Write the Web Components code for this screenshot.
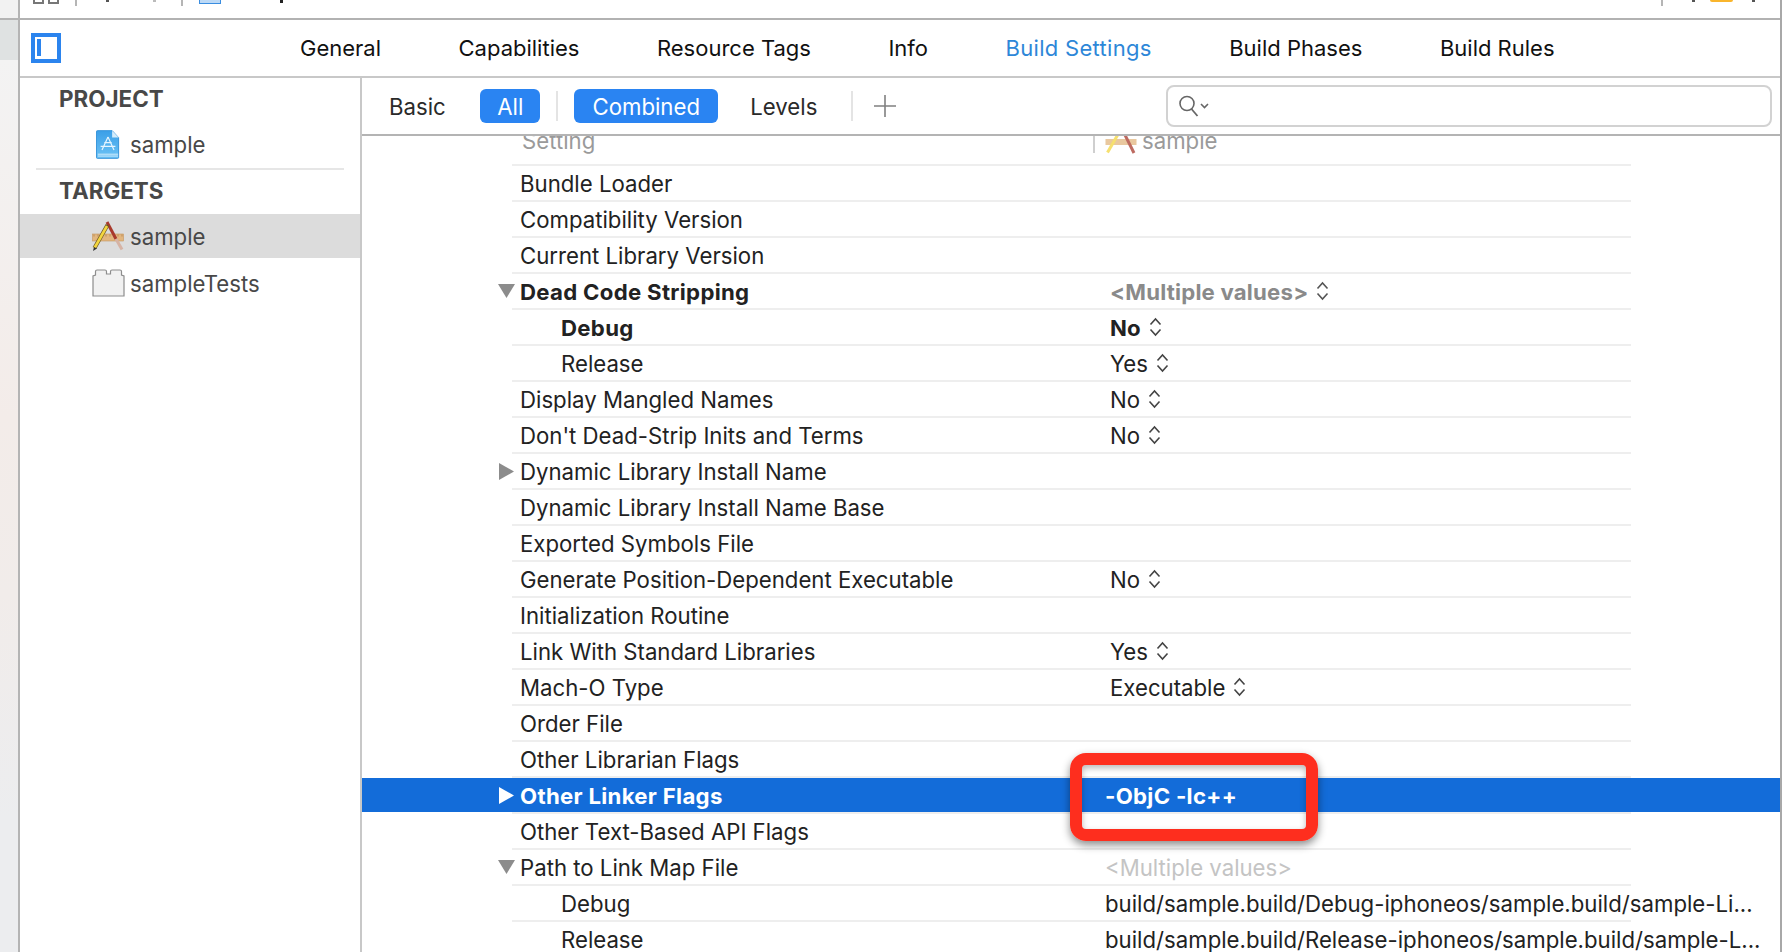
<!DOCTYPE html>
<html>
<head>
<meta charset="utf-8">
<title>Build Settings</title>
<style>
  html, body { margin: 0; padding: 0; height: 100%; overflow: hidden; background: #fff; }
  body { font-family: Inter, "Liberation Sans", sans-serif; }
</style>
</head>
<body>

<template id="icons">
  <svg data-icon="project" width="24" height="31" viewBox="0 0 26 32">
    <defs><linearGradient id="docfill" x1="0" y1="0" x2="0" y2="1"><stop offset="0" stop-color="#3b9fe8"/><stop offset="1" stop-color="#6cc3f5"/></linearGradient></defs>
    <path d="M1.5 1h16l7 7.5V30a1 1 0 0 1-1 1h-22a1 1 0 0 1-1-1V2a1 1 0 0 1 1-1z" fill="url(#docfill)" stroke="#2f8fd8"/>
    <path d="M17.5 1v7.5h7z" fill="#d4ecfb"/>
    <path d="M2 26.5h22M2 28.5h22" stroke="#d8effc" stroke-width="1"/>
    <path d="M13 8l-6.5 14M13 8l6.5 14M5 18h16M9 14h8" stroke="#e6f5ff" stroke-width="1.3" fill="none"/>
  </svg>
  <svg data-icon="target" width="32" height="30" viewBox="0 0 32 30">
    <rect x="0.5" y="13" width="31" height="7" fill="#e2b67f" stroke="#c7975f" stroke-width=".6"/>
    <path d="M2 13.5v2M6 13.5v2M10 13.5v2M14 13.5v2M18 13.5v2M22 13.5v2M26 13.5v2M30 13.5v2" stroke="#a97c49" stroke-width=".7"/>
    <path d="M15 1L24 18" stroke="#a8392c" stroke-width="3"/>
    <path d="M24 18L30 28.5" stroke="#d6b3a4" stroke-width="3"/>
    <path d="M15.5 4L2.5 27" stroke="#6a5526" stroke-width="4"/>
    <path d="M15 5L2.5 27" stroke="#f3d63f" stroke-width="2.6"/>
    <path d="M1 30l1-4 3 1.5z" fill="#333"/>
  </svg>
  <svg data-icon="bundle" width="33" height="28" viewBox="0 0 33 28">
    <path d="M1 27V7l2.5-1V2.5A1.5 1.5 0 0 1 5 1h8a1.5 1.5 0 0 1 1.5 1.5V5h4V2.5A1.5 1.5 0 0 1 20 1h8a1.5 1.5 0 0 1 1.5 1.5V6L32 7v20z" fill="#f1f1f1" stroke="#8d8d8d" stroke-width="1.2"/>
  </svg>
  <svg data-icon="stepper" width="13" height="20" viewBox="0 0 13 20">
    <path d="M1.5 7.5L6.5 2l5 5.5M1.5 12.5l5 5.5 5-5.5" fill="none" stroke="currentColor" stroke-width="1.6"/>
  </svg>
</template>

<template id="xc-toolbar-stub">
  <style>
    :host { display: flex; align-items: flex-start; height: 18px; background: #fff; border-bottom: 2px solid #b2b2b2; overflow: hidden; }
    i { display: block; flex: none; }
    .box { width: 7px; height: 2px; border: 2px solid #777; border-top: 0; margin-right: 4px; }
    .sep { width: 2px; height: 6px; background: #b5b5b5; }
    .dot { width: 3px; height: 2px; background: #555; }
    .doc { width: 20px; height: 3px; background: #bcd9f6; border: 1px solid #3a8de0; border-top: 0; }
    .yellow { width: 23px; height: 2px; background: #f9b52c; border-radius: 0 0 5px 5px; }
  </style>
  <i class="box" style="margin-left:13px"></i><i class="box"></i>
  <i class="sep" style="margin-left:12px"></i>
  <i class="dot" style="margin-left:29px"></i>
  <i class="dot" style="margin-left:44px;background:#bbb"></i>
  <i class="sep" style="margin-left:25px"></i>
  <i class="doc" style="margin-left:16px"></i>
  <i class="dot" style="margin-left:59px;background:#222;height:3px"></i>
  <i class="sep" style="margin-left:1378px"></i>
  <i class="dot" style="margin-left:29px"></i>
  <i class="yellow" style="margin-left:15px"></i>
  <i class="dot" style="margin-left:19px"></i>
</template>

<template id="xc-tabs">
  <style>
    :host { display: flex; align-items: center; height: 56px; border-bottom: 2px solid #c8c8c8; background: #fff; font-size: 22px; color: #111; }
    .toggle { flex: none; margin-left: 11px; margin-right: 239px; width: 30px; height: 30px; }
    .tabs { display: flex; gap: 77.5px; margin-top: -1px; }
    ::slotted(.active) { color: #2d87d8; letter-spacing: .3px; }
  </style>
  <svg class="toggle" viewBox="0 0 30 30">
    <rect width="30" height="30" fill="#2b84ee"/>
    <rect x="4" y="4" width="22" height="22" fill="#fff"/>
    <rect x="6" y="6" width="4" height="17" fill="#2b84ee"/>
  </svg>
  <div class="tabs"><slot></slot></div>
</template>

<template id="xc-sidebar">
  <style>
    :host { display: block; flex: none; width: 340px; box-sizing: content-box; border-right: 2px solid #c8c8c8; background: #fff; color: #444; font-size: 22.2px; overflow: hidden; }
  </style>
  <slot></slot>
</template>

<template id="xc-side-head">
  <style>
    :host { display: flex; align-items: center; height: 40px; padding-bottom: 4px; padding-left: 39px; font-weight: 700; font-size: 22.4px; color: #484848; }
  </style>
  <slot></slot>
</template>

<template id="xc-side-item">
  <style>
    :host { display: flex; align-items: center; height: 44px; color: #484848; position: relative; }
    :host([selected]) { background: #dcdcdc; }
    .icon { width: 36px; margin-left: 70px; margin-right: 4px; display: flex; justify-content: center; }
  </style>
  <span class="icon"></span><slot></slot>
</template>

<template id="xc-filter-bar">
  <style>
    :host { display: flex; align-items: center; height: 56px; border-bottom: 2px solid #b4b4b4; padding-left: 27px; background: #fff; font-size: 22.2px; color: #2a2a2a; flex: none; }
    span { display: flex; align-items: center; height: 34px; flex: none; }
    .on { background: #2a84f2; color: #fff; border-radius: 6px; justify-content: center; }
    .sep { width: 2px; height: 30px; background: #e4e4e4; }
    .search { margin-left: auto; margin-right: 8px; width: 606px; height: 42px; box-sizing: border-box; border: 2px solid #d2d2d2; border-radius: 8px; padding-left: 11px; }
    svg { display: block; }
  </style>
  <span>Basic</span>
  <span class="on" style="width:60px;margin-left:34.5px">All</span>
  <span class="sep" style="margin-left:16px"></span>
  <span class="on" style="width:144px;margin-left:16px">Combined</span>
  <span style="margin-left:32px">Levels</span>
  <span class="sep" style="margin-left:33.5px"></span>
  <svg style="margin-left:21px" width="22" height="22" viewBox="0 0 22 22"><path d="M11 0v22M0 11h22" stroke="#808080" stroke-width="1.6"/></svg>
  <span class="search">
    <svg width="32" height="22" viewBox="0 0 32 22">
      <circle cx="8" cy="8.5" r="7" fill="none" stroke="#666" stroke-width="1.6"/>
      <path d="M12.5 14l6 7" stroke="#666" stroke-width="1.8"/>
      <path d="M22 9l3.5 3.5L29 9" fill="none" stroke="#666" stroke-width="1.6"/>
    </svg>
  </span>
</template>

<template id="xc-row">
  <style>
    :host { display: block; height: 36px; font-size: 22.2px; color: #222; white-space: nowrap; }
    .line { display: flex; align-items: center; box-sizing: border-box; height: 36px; margin-left: 150px; width: 1119px; border-bottom: 2px solid #eeeeee; }
    :host([selected]) { color: #fff; font-weight: 700; letter-spacing: .3px; }
    :host([selected]) .wrap { background: linear-gradient(#136cd9, #136cd9) left top / 100% 34px no-repeat; }
    :host([strong]) .name { font-weight: 700; letter-spacing: .3px; }
    /* The triangle hangs out on the left of the separator line. */
    .arrow { flex: none; width: 8px; }
    .arrow svg { margin-left: -14px; }
    .name { flex: none; width: 585px; box-sizing: border-box; }
    :host([indent]) .name { padding-left: 41px; }
    .value { flex: none; display: flex; align-items: center; gap: 8px; }
    :host([stepper]) .value { padding-left: 5px; }
    .step { display: none; }
    :host([stepper]) .step { display: block; }
    :host([valbold]) .value { font-weight: 700; letter-spacing: .2px; }
    :host([muted]) .value { color: #8a8a8a; }
    :host([faint]) .value { color: #c4c4c4; }
    svg { display: block; }
  </style>
  <div class="wrap"><div class="line">
    <span class="arrow"></span>
    <span class="name"><slot></slot></span>
    <span class="value"><slot name="value"></slot><span class="step"></span></span>
  </div></div>
</template>

<template id="xc-editor">
  <style>
    :host { display: flex; flex-direction: column; flex: 1; min-width: 0; overflow: hidden; background: #fff; }
    /* The header row is scrolled up a little, under the filter bar. */
    .head { display: flex; align-items: center; height: 28px; margin-left: 150px; width: 1119px; border-bottom: 2px solid #eeeeee; color: #9a9a9a; font-size: 22.2px; overflow: hidden; flex: none; }
    .head .setting { margin-left: 10px; width: 571px; margin-top: -20px; flex: none; }
    .head .sep { width: 2px; height: 17px; background: #cfcfcf; align-self: flex-start; flex: none; }
    .head svg { margin-left: 10px; margin-top: -20px; flex: none; }
    .head .tgt { margin-left: 5px; margin-top: -20px; flex: none; }
  </style>
  <xc-filter-bar></xc-filter-bar>
  <div class="head">
    <span class="setting">Setting</span><span class="sep"></span>
    <svg width="32" height="32" viewBox="0 0 32 32" opacity=".75">
      <rect x="0.5" y="15" width="31" height="6" fill="#e2b67f"/>
      <path d="M16 3L29 29" stroke="#a8392c" stroke-width="3"/>
      <path d="M15.5 6L2.5 28.5" stroke="#f3d63f" stroke-width="3"/>
    </svg>
    <span class="tgt">sample</span>
  </div>
  <slot></slot>
</template>

<template id="xc-window">
  <style>
    :host { display: flex; height: 952px; position: relative; overflow: hidden; background: #fff; }
    .edge { flex: none; width: 18px; border-right: 2px solid #b4b4b4; display: flex; flex-direction: column; }
    .edge .a { height: 18px; background: #f2f2f2; border-bottom: 2px solid #b4b4b4; }
    .edge .b { height: 40px; background: #dfe2e2; }
    .edge .c { flex: 1; background: linear-gradient(#f3f3f3, #f3ece9 40%, #f1ecea 60%, #ecedef 85%); }
    .main { flex: 1; min-width: 0; display: flex; flex-direction: column; border-right: 2px solid #a8a8a8; }
    .body { flex: 1; min-height: 0; display: flex; }
    .mark { position: absolute; left: 1070px; top: 753px; width: 248px; height: 88px; box-sizing: border-box; border: 12px solid #fe2e1e; border-radius: 16px; box-shadow: 0 4px 9px rgba(0,0,0,.45), inset 0 3px 6px rgba(0,0,0,.28); }
  </style>
  <div class="edge"><div class="a"></div><div class="b"></div><div class="c"></div></div>
  <div class="main">
    <xc-toolbar-stub></xc-toolbar-stub>
    <slot name="tabs"></slot>
    <div class="body"><slot name="sidebar"></slot><slot name="editor"></slot></div>
  </div>
  <div class="mark"></div>
</template>

<xc-window>
  <xc-tabs slot="tabs">
    <span>General</span><span>Capabilities</span><span>Resource Tags</span><span>Info</span>
    <span class="active">Build Settings</span><span>Build Phases</span><span>Build Rules</span>
  </xc-tabs>

  <xc-sidebar slot="sidebar">
    <xc-side-head>PROJECT</xc-side-head>
    <xc-side-item icon="project">sample</xc-side-item>
    <div style="height:2px;background:#e6e6e6;margin:2px 16px 0"></div>
    <xc-side-head>TARGETS</xc-side-head>
    <xc-side-item icon="target" selected>sample</xc-side-item>
    <xc-side-item icon="bundle" style="height:50px">sampleTests</xc-side-item>
  </xc-sidebar>

  <xc-editor slot="editor">
    <xc-row>Bundle Loader</xc-row>
    <xc-row>Compatibility Version</xc-row>
    <xc-row>Current Library Version</xc-row>
    <xc-row arrow="down" strong stepper valbold muted>Dead Code Stripping<span slot="value">&lt;Multiple values&gt;</span></xc-row>
    <xc-row indent strong stepper valbold>Debug<span slot="value">No</span></xc-row>
    <xc-row indent stepper>Release<span slot="value">Yes</span></xc-row>
    <xc-row stepper>Display Mangled Names<span slot="value">No</span></xc-row>
    <xc-row stepper>Don't Dead-Strip Inits and Terms<span slot="value">No</span></xc-row>
    <xc-row arrow="right">Dynamic Library Install Name</xc-row>
    <xc-row>Dynamic Library Install Name Base</xc-row>
    <xc-row>Exported Symbols File</xc-row>
    <xc-row stepper>Generate Position-Dependent Executable<span slot="value">No</span></xc-row>
    <xc-row>Initialization Routine</xc-row>
    <xc-row stepper>Link With Standard Libraries<span slot="value">Yes</span></xc-row>
    <xc-row stepper>Mach-O Type<span slot="value">Executable</span></xc-row>
    <xc-row>Order File</xc-row>
    <xc-row>Other Librarian Flags</xc-row>
    <xc-row arrow="right" selected>Other Linker Flags<span slot="value">-ObjC -lc++</span></xc-row>
    <xc-row>Other Text-Based API Flags</xc-row>
    <xc-row arrow="down" faint>Path to Link Map File<span slot="value">&lt;Multiple values&gt;</span></xc-row>
    <xc-row indent>Debug<span slot="value">build/sample.build/Debug-iphoneos/sample.build/sample-Li...</span></xc-row>
    <xc-row indent>Release<span slot="value">build/sample.build/Release-iphoneos/sample.build/sample-L...</span></xc-row>
  </xc-editor>
</xc-window>

<script>
/**
 * Base class: clones the template named after the tag into an open shadow root.
 */
class XcElement extends HTMLElement {
  constructor() {
    super()
    const template = document.getElementById(this.localName)
    this.root = this.attachShadow({ mode: "open" })
    this.root.appendChild(template.content.cloneNode(true))
  }

  /**
   * Get a copy of one of the shared icons.
   * @param {string} name Icon name.
   * @return {SVGElement}
   */
  icon(name) {
    return document.getElementById("icons").content
      .querySelector(`[data-icon="${name}"]`).cloneNode(true)
  }
}

class XcSideItem extends XcElement {
  connectedCallback() {
    const holder = this.root.querySelector(".icon")
    if(holder.children.length === 0) {
      holder.appendChild(this.icon(this.getAttribute("icon")))
    }
  }
}

class XcRow extends XcElement {
  connectedCallback() {
    const arrow = this.getAttribute("arrow")
    const holder = this.root.querySelector(".arrow")

    if(arrow && holder.children.length === 0) {
      // The disclosure triangle is white on a selected row
      const fill = this.hasAttribute("selected") ? "#fff" : "#8c8c8c"
      const shape = arrow === "down" ? "M0 1h17L8.5 15z" : "M1 0l15 8.5-15 8.5z"
      holder.innerHTML =
        `<svg width="17" height="17" viewBox="0 0 17 17"><path d="${shape}" fill="${fill}"/></svg>`
    }

    if(this.hasAttribute("stepper")) {
      const step = this.root.querySelector(".step")
      if(step.children.length === 0) {
        const svg = this.icon("stepper")
        svg.style.color = this.hasAttribute("muted") ? "#555" : "#444"
        step.appendChild(svg)
      }
    }
  }
}

["xc-toolbar-stub", "xc-tabs", "xc-sidebar", "xc-side-head", "xc-filter-bar", "xc-editor", "xc-window"]
  .forEach(name => customElements.define(name, class extends XcElement {}))
customElements.define("xc-side-item", XcSideItem)
customElements.define("xc-row", XcRow)
</script>
</body>
</html>
